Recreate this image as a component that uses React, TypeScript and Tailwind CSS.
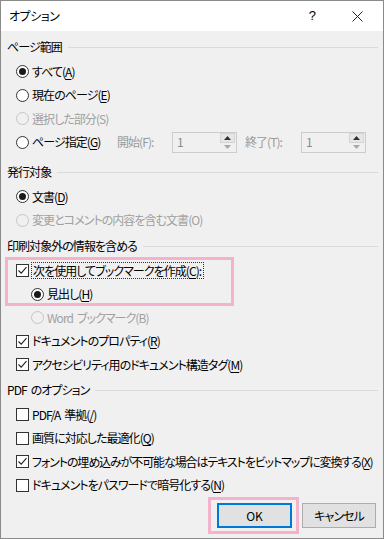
import React from "react";

const font = "font-['Noto_Sans_CJK_JP','Noto_Sans',sans-serif] [font-feature-settings:'palt'] tracking-[-0.95px]";

function Key({ children }: { children: React.ReactNode }) {
  return <span className="underline underline-offset-2 decoration-1">{children}</span>;
}

function Sp() {
  return <span className="inline-block w-[4px]" />;
}

function Radio({ checked = false, disabled = false }: { checked?: boolean; disabled?: boolean }) {
  return (
    <span
      className={`flex h-[13px] w-[13px] shrink-0 items-center justify-center rounded-full border ${
        disabled ? "border-[#c5c5c5] bg-[#f0f0f0]" : "border-[#333333] bg-white"
      }`}
    >
      {checked && <span className="h-[7px] w-[7px] rounded-full bg-[#1a1a1a]" />}
    </span>
  );
}

function Check({ checked = false }: { checked?: boolean }) {
  return (
    <span className="flex h-[13px] w-[13px] shrink-0 items-center justify-center border border-[#333333] bg-white">
      {checked && (
        <svg width="11" height="11" viewBox="0 0 11 11">
          <path d="M1.5 5.5 L4.2 8.2 L9.5 2.2" fill="none" stroke="#222" strokeWidth="1.1" />
        </svg>
      )}
    </span>
  );
}

function Row({ sub = false, children }: { sub?: boolean; children: React.ReactNode }) {
  return (
    <div
      className={`flex h-[23.5px] items-center gap-[3px] whitespace-nowrap ${sub ? "pl-[30px]" : "pl-[15px]"}`}
    >
      {children}
    </div>
  );
}

function Header({ children }: { children: React.ReactNode }) {
  return (
    <div className="flex h-[25px] items-center pl-[6px] pr-[5px]">
      <span className="-mt-[1px] text-[12px] text-black">{children}</span>
      <span className="ml-[6px] mb-[1px] h-px flex-1 bg-[#dadada]" />
    </div>
  );
}

function Spin() {
  return (
    <div className="flex h-[21px] w-[65px] shrink-0 items-center border border-[#cccccc] bg-[#f0f0f0]">
      <span className="flex-1 pl-[4px] text-[12px] text-[#8a8a8a]">1</span>
      <div className="mr-px flex h-[19px] w-[15px] flex-col">
        <div className="flex h-[10px] items-center justify-center border border-[#d4d4d4] bg-[#e6e6e6]">
          <svg width="7" height="4" viewBox="0 0 7 4">
            <path d="M0 4 L3.5 0 L7 4 Z" fill="#333" />
          </svg>
        </div>
        <div className="flex h-[9px] items-center justify-center">
          <svg width="7" height="4" viewBox="0 0 7 4">
            <path d="M0 0 L3.5 4 L7 0 Z" fill="#a8a8a8" />
          </svg>
        </div>
      </div>
    </div>
  );
}

export default function App() {
  return (
    <div className={`h-[539px] w-[384px] overflow-hidden border border-[#8a8a8a] bg-[#f0f0f0] ${font} text-[12px] text-black`}>
      {/* title bar */}
      <div className="flex h-[30px] items-center bg-white pl-[8px]">
        <span className="text-[12px] tracking-[-0.5px]">オプション</span>
        <span className="ml-auto mr-[37px] text-[13px] font-['Liberation_Sans',sans-serif]">?</span>
        <svg className="mr-[20px]" width="11" height="11" viewBox="0 0 11 11">
          <path d="M0.5 0.5 L10.5 10.5 M10.5 0.5 L0.5 10.5" stroke="#222" strokeWidth="1" />
        </svg>
      </div>

      <div className="pt-[4px]">
        <Header>ページ範囲</Header>
        <Row>
          <Radio checked />
          <span>
            すべて(<Key>A</Key>)
          </span>
        </Row>
        <Row>
          <Radio />
          <span>
            現在のページ(<Key>E</Key>)
          </span>
        </Row>
        <Row>
          <Radio disabled />
          <span className="text-[#a0a0a0]">選択した部分(S)</span>
        </Row>
        <Row>
          <Radio />
          <span className="w-[85px] shrink-0">
            ページ指定(<Key>G</Key>)
          </span>
          <span className="-ml-[3px] w-[55px] shrink-0 text-[#9a9a9a]">開始(F):</span>
          <span className="-ml-[3px] flex">
            <Spin />
          </span>
          <span className="ml-[5px] w-[56px] shrink-0 text-[#9a9a9a]">終了(T):</span>
          <span className="-ml-[3px] flex">
            <Spin />
          </span>
        </Row>

        <div className="mt-[6px]">
          <Header>発行対象</Header>
        </div>
        <Row>
          <Radio checked />
          <span>
            文書(<Key>D</Key>)
          </span>
        </Row>
        <Row>
          <Radio disabled />
          <span className="text-[#a0a0a0]">変更とコメントの内容を含む文書(O)</span>
        </Row>

        <div className="mt-[2px]">
          <Header>印刷対象外の情報を含める</Header>
        </div>
        <div className="relative">
          <Row>
            <Check checked />
            <span className="-ml-[1px] border border-dotted border-[#333] pl-px pr-[2px] leading-[15px]">
              次を使用してブックマークを作成(<Key>C</Key>):
            </span>
          </Row>
          <Row sub>
            <Radio checked />
            <span>
              見出し(<Key>H</Key>)
            </span>
          </Row>
          <div className="pointer-events-none absolute left-[4px] top-[-2px] h-[49px] w-[229px] border-[3px] border-[#f5b3cb]" />
        </div>
        <Row sub>
          <Radio disabled />
          <span className="text-[#a0a0a0]">
            Word
            <Sp />
            ブックマーク(B)
          </span>
        </Row>
        <Row>
          <Check checked />
          <span>
            ドキュメントのプロパティ(<Key>R</Key>)
          </span>
        </Row>
        <Row>
          <Check checked />
          <span>
            アクセシビリティ用のドキュメント構造タグ(<Key>M</Key>)
          </span>
        </Row>

        <div className="mt-[1.5px]">
          <Header>
            PDF
            <Sp />
            のオプション
          </Header>
        </div>
        <Row>
          <Check />
          <span>
            PDF/A
            <Sp />
            準拠(<Key>/</Key>)
          </span>
        </Row>
        <Row>
          <Check />
          <span>
            画質に対応した最適化(<Key>Q</Key>)
          </span>
        </Row>
        <Row>
          <Check checked />
          <span className="tracking-[-1.1px]">
            フォントの埋め込みが不可能な場合はテキストをビットマップに変換する(<Key>X</Key>)
          </span>
        </Row>
        <Row>
          <Check />
          <span>
            ドキュメントをパスワードで暗号化する(<Key>N</Key>)
          </span>
        </Row>

        <div className="mt-[6px] flex justify-end gap-[10px] pr-[7px]">
          <div className="relative">
            <button className="flex h-[25px] w-[75px] items-center justify-center border-2 border-[#0078d7] bg-[#e1e1e1] text-[12px] tracking-normal">
              OK
            </button>
            <div className="pointer-events-none absolute -left-[9px] -top-[6px] h-[37px] w-[91px] border-[3px] border-[#f5b3cb]" />
          </div>
          <button className="flex h-[25px] w-[74px] items-center justify-center border border-[#adadad] bg-[#e1e1e1] text-[12px]">
            キャンセル
          </button>
        </div>
      </div>
    </div>
  );
}
